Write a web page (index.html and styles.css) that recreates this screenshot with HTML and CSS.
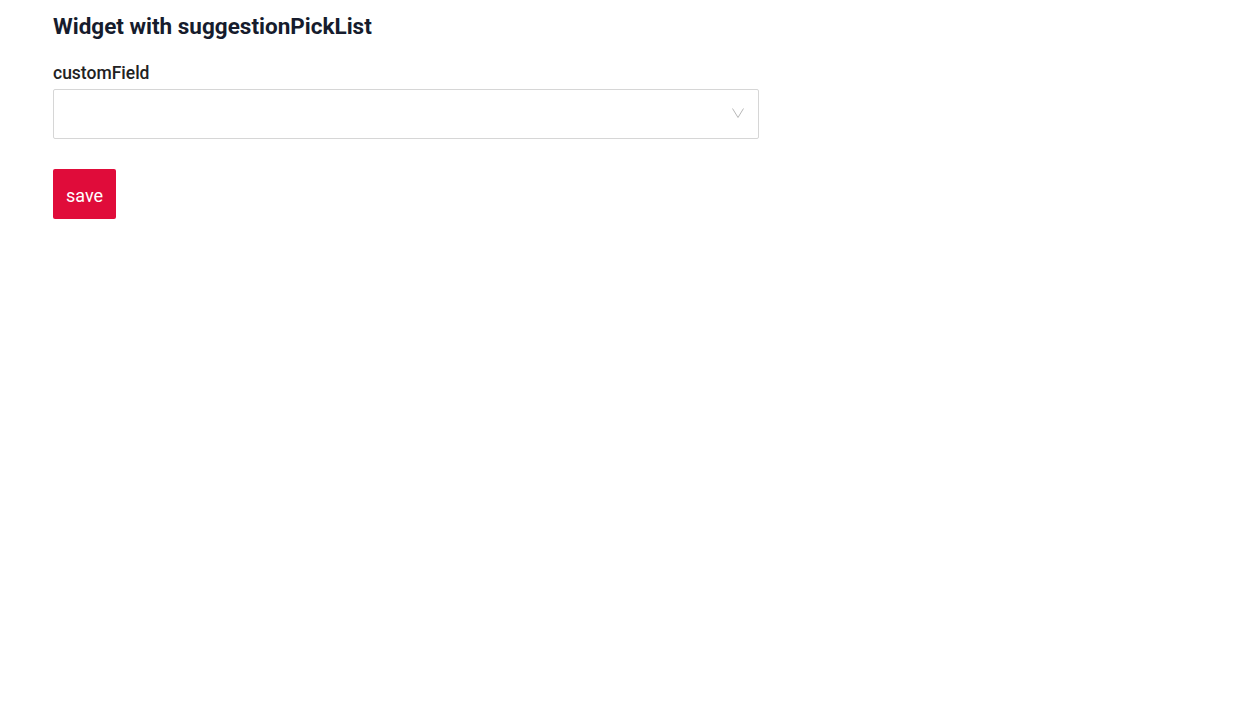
FILE: index.html
```html
<!DOCTYPE html>
<html>
<head>
<meta charset="utf-8">
<link rel="stylesheet" href="styles.css">
</head>
<body>
<div class="page">
  <h1 class="title">Widget with suggestionPickList</h1>
  <form class="form">
    <label class="label">customField</label>
    <div class="select">
      <svg class="chevron" width="12" height="10" viewBox="0 0 12 10"><path d="M0.5 0.5 L6 9.5 L11.5 0.5" fill="none" stroke="#b8b8b8" stroke-width="1"/></svg>
    </div>
    <button type="button" class="save">save</button>
  </form>
</div>
</body>
</html>
```
FILE: styles.css
```css
html, body { margin: 0; padding: 0; background: #fff; }
body { font-family: Roboto, "Liberation Sans", sans-serif; }
.page { padding: 11px 53px 0; }
.title { margin: 0; font-size: 22.5px; line-height: 30px; font-weight: 700; color: #161c2d; }
.form { display: flex; flex-direction: column; align-items: flex-start; margin-top: 22px; }
.label { font-size: 17.5px; font-weight: 500; color: #222; line-height: 20px; }
.select { box-sizing: border-box; width: 706px; height: 50px; border: 1px solid #d6d6d6; border-radius: 2px; margin-top: 6px; display: flex; align-items: center; justify-content: flex-end; padding-right: 14px; }
.chevron { display: block; margin-bottom: 2px; }
.save { margin-top: 30px; height: 50px; width: 63px; background: #e00c3a; color: #fff; border: none; border-radius: 2px; font-family: inherit; font-size: 18px; padding: 2px 0 0; }
```
